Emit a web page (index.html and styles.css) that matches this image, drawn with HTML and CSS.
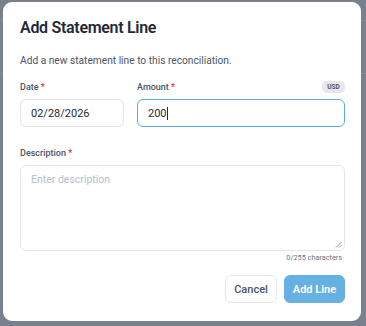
FILE: index.html
```html
<!DOCTYPE html>
<html lang="en">
<head>
    <meta charset="UTF-8">
    <meta name="viewport" content="width=device-width, initial-scale=1.0">
    <title>Add Statement Line</title>
    <link rel="stylesheet" href="styles.css">
</head>
<body>
    <div class="overlay">
        <div class="modal">
            <h2 class="modal-title">Add Statement Line</h2>
            <p class="modal-text">Add a new statement line to this reconciliation.</p>

            <div class="row">
                <div class="field field-date">
                    <div class="label-row">
                        <label class="label">Date <span class="req">*</span></label>
                    </div>
                    <div class="input">02/28/2026</div>
                </div>
                <div class="field field-amount">
                    <div class="label-row">
                        <label class="label">Amount <span class="req">*</span></label>
                        <span class="badge">USD</span>
                    </div>
                    <div class="input input-focus">200<span class="caret"></span></div>
                </div>
            </div>

            <div class="field field-desc">
                <div class="label-row">
                    <label class="label">Description <span class="req">*</span></label>
                </div>
                <div class="textarea">
                    <span class="placeholder">Enter description</span>
                    <svg class="grip" width="7" height="7" viewBox="0 0 7 7">
                        <path d="M6.5 1 L1 6.5 M6.5 4 L4 6.5" stroke="#8b95a3" stroke-width="0.9" fill="none"/>
                    </svg>
                </div>
                <div class="counter">0/255 characters</div>
            </div>

            <div class="actions">
                <button class="btn btn-cancel">Cancel</button>
                <button class="btn btn-primary">Add Line</button>
            </div>
        </div>
    </div>
</body>
</html>
```

FILE: styles.css
```css
body {
    margin: 0;
    padding: 0;
    font-family: Roboto, "Noto Sans", sans-serif;
    background-color: #79818f;
    background-image:
        linear-gradient(to bottom, transparent 20px, #858c99 20px, #858c99 21px, transparent 21px),
        linear-gradient(to bottom, transparent 73px, #858c99 73px, #858c99 74px, transparent 74px);
}
.overlay {
    width: 366px;
    height: 326px;
    padding: 2px 5px 5px 3px;
    box-sizing: border-box;
}
.modal {
    background: #fff;
    border-radius: 9px;
    height: 319px;
    box-sizing: border-box;
    padding: 16px 16px 0 17px;
}
.modal-title {
    margin: 0;
    font-size: 16px;
    font-weight: 600;
    letter-spacing: -0.3px;
    color: #1f2937;
    line-height: 20px;
}
.modal-text {
    margin: 16px 0 0;
    font-size: 10.2px;
    color: #4b5563;
    line-height: 14px;
}
.row {
    display: flex;
    gap: 13px;
    margin-top: 13px;
}
.field-date {
    width: 104px;
}
.field-amount {
    flex: 1;
}
.label-row {
    display: flex;
    justify-content: space-between;
    align-items: center;
    height: 12px;
    margin-bottom: 6px;
}
.label {
    font-size: 9px;
    font-weight: 500;
    color: #4b5563;
    line-height: 12px;
}
.req {
    color: #e11d48;
}
.badge {
    background: #e5e7eb;
    color: #4b5563;
    font-size: 6.5px;
    font-weight: 700;
    width: 23px;
    height: 12px;
    line-height: 12px;
    text-align: center;
    border-radius: 5px;
}
.input {
    height: 28px;
    box-sizing: border-box;
    border: 1px solid #e2e6ec;
    border-radius: 6px;
    padding: 0 10px;
    display: flex;
    align-items: center;
    font-size: 11px;
    color: #1f2937;
}
.input-focus {
    border-color: #5aa9e2;
}
.caret {
    display: inline-block;
    width: 1px;
    height: 13px;
    background: #1f2937;
}
.field-desc {
    margin-top: 20px;
}
.textarea {
    position: relative;
    height: 86px;
    box-sizing: border-box;
    border: 1px solid #e2e6ec;
    border-radius: 6px;
    padding: 7px 10px;
    font-size: 10.5px;
    line-height: 14px;
}
.placeholder {
    color: #b6bec9;
}
.grip {
    position: absolute;
    right: 2px;
    bottom: 2px;
}
.counter {
    text-align: right;
    font-size: 7.3px;
    line-height: 10px;
    color: #6b7280;
    margin-top: 2px;
    padding-right: 3px;
}
.actions {
    display: flex;
    justify-content: flex-end;
    gap: 7px;
    margin-top: 12px;
}
.btn {
    height: 28px;
    border-radius: 6px;
    font-family: Roboto, "Noto Sans", sans-serif;
    font-size: 11px;
    padding: 0;
    white-space: nowrap;
}
.btn-cancel {
    background: #fff;
    border: 1px solid #e5e7eb;
    color: #4b5563;
    font-weight: 500;
    width: 52px;
}
.btn-primary {
    background: #66b1e1;
    border: 1px solid #66b1e1;
    color: #fff;
    font-weight: 600;
    width: 61px;
}
```
